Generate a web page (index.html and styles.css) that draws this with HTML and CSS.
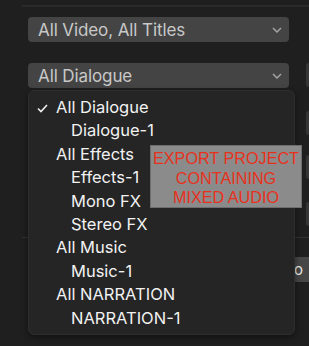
FILE: index.html
```html
<!DOCTYPE html>
<html lang="en">
<head>
  <meta charset="UTF-8" />
  <title>Roles popup</title>
  <link rel="stylesheet" href="styles.css">
</head>
<body>
  <div class="panel">
    <div class="rule"></div>

    <div class="row first">
      <div class="popup">
        <span>All Video, All Titles</span>
        <svg class="chev" width="10" height="6" viewBox="0 0 10 6"><path d="M1 1 L5 5 L9 1" fill="none" stroke="#a8a8a8" stroke-width="1.4"/></svg>
      </div>
    </div>

    <div class="row second">
      <div class="popup">
        <span>All Dialogue</span>
        <svg class="chev" width="10" height="6" viewBox="0 0 10 6"><path d="M1 1 L5 5 L9 1" fill="none" stroke="#a8a8a8" stroke-width="1.4"/></svg>
      </div>
      <div class="side"></div>
    </div>

    <div class="row third"><div class="spacer"></div><div class="side"></div></div>
    <div class="row fourth"><div class="spacer"></div><div class="side"></div></div>
    <div class="row fifth"><div class="spacer"></div><div class="side"></div></div>

    <div class="rule lower"></div>

    <div class="row sixth">
      <div class="btn">Audio</div>
    </div>
  </div>

  <div class="menu">
    <div class="item top checked">
      <svg class="check" width="11" height="9" viewBox="0 0 11 9"><path d="M1 4.5 L4 7.5 L10 1" fill="none" stroke="#f0f0f0" stroke-width="1.6"/></svg>
      All Dialogue
    </div>
    <div class="item sub">Dialogue-1</div>
    <div class="item top">All Effects</div>
    <div class="item sub">Effects-1</div>
    <div class="item sub">Mono FX</div>
    <div class="item sub">Stereo FX</div>
    <div class="item top">All Music</div>
    <div class="item sub">Music-1</div>
    <div class="item top">All NARRATION</div>
    <div class="item sub">NARRATION-1</div>
  </div>

  <div class="note">EXPORT PROJECT<br>CONTAINING<br>MIXED AUDIO</div>
</body>
</html>
```

FILE: styles.css
```css
body {
  margin: 0;
  background: #1f1f1f;
  font-family: 'Inter', 'Noto Sans', sans-serif;
  width: 309px;
  height: 346px;
  overflow: hidden;
  position: relative;
}
.panel {
  padding-top: 5px;
}
.rule {
  height: 2px;
  margin-left: 22px;
  background: #2a2a2a;
}
.rule.lower {
  height: 1px;
  margin-top: 11px;
  background: #333;
}
.row {
  display: flex;
  gap: 17px;
  padding-left: 28px;
}
.row.first { margin-top: 10px; }
.row.second { margin-top: 21px; }
.row.third { margin-top: 23px; }
.row.fourth { margin-top: 20px; }
.row.fifth { margin-top: 23px; }
.row.sixth {
  margin-top: 19px;
  justify-content: flex-end;
  padding-left: 0;
}
.popup {
  flex-shrink: 0;
  width: 261px;
  height: 25px;
  box-sizing: border-box;
  background: #444;
  border-radius: 4px;
  display: flex;
  align-items: center;
  justify-content: space-between;
  padding: 0 7px 0 10px;
  color: #c8c8c8;
  font-size: 17px;
  letter-spacing: -0.1px;
}
.spacer {
  flex-shrink: 0;
  width: 261px;
}
.side {
  flex-shrink: 0;
  width: 3px;
  height: 24px;
  background: #363636;
  border-radius: 4px 0 0 4px;
}
.btn {
  width: 80px;
  height: 25px;
  background: #474747;
  color: #e8e8e8;
  font-size: 15px;
  display: flex;
  align-items: center;
  justify-content: flex-end;
  padding-right: 6px;
}
.menu {
  position: absolute;
  left: 28px;
  top: 90px;
  width: 267px;
  height: 245px;
  box-sizing: border-box;
  padding-top: 5px;
  background: #252525;
  border: 1px solid #2e2e2e;
  border-radius: 6px;
  box-shadow: 0 2px 6px rgba(0, 0, 0, 0.5);
}
.item {
  height: 23.4px;
  line-height: 23.4px;
  color: #f2f2f2;
  font-size: 16.5px;
  letter-spacing: 0;
  position: relative;
}
.item.top { padding-left: 27px; }
.item.sub { padding-left: 42px; }
.check {
  position: absolute;
  left: 8px;
  top: 8px;
}
.note {
  position: absolute;
  left: 150px;
  top: 145px;
  width: 152px;
  height: 63px;
  box-sizing: border-box;
  padding-top: 3px;
  background: #8b8b8b;
  border: 1px solid #6e6e6e;
  color: #e8311c;
  font-family: 'Liberation Sans', Arial, sans-serif;
  font-size: 16.2px;
  line-height: 19.5px;
  text-align: center;
}
```
